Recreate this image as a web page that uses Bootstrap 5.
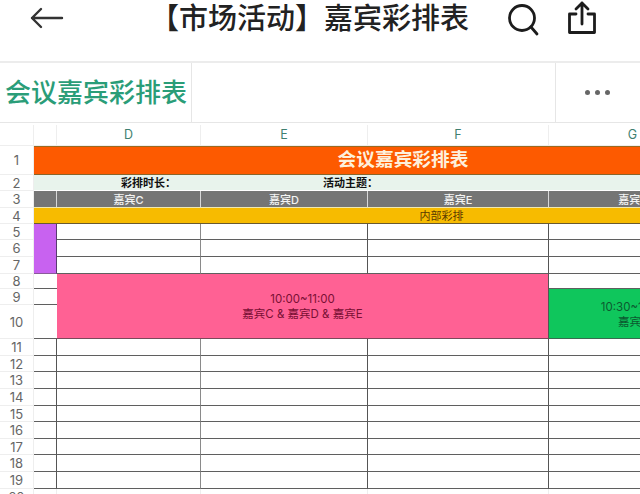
<!DOCTYPE html>
<html lang="zh">
<head>
<meta charset="utf-8">
<title>会议嘉宾彩排表</title>
<link href="https://cdn.jsdelivr.net/npm/bootstrap@5.3.0/dist/css/bootstrap.min.css" rel="stylesheet">
<style>
html,body{height:494px;overflow:hidden;background:#fff}
body{font-family:Inter,"Noto Sans CJK SC",sans-serif}
.topbar{height:63px;border-bottom:2px solid #ececec;padding:0 0 23px 29px}
.back-ico{width:36px;height:24px;color:#333}
.page-title{font-size:29px;line-height:36px;color:#222;font-weight:500;margin-left:85px;white-space:nowrap;width:319px}
.search-ico{width:36px;height:36px;margin-left:36px;color:#1c1c1c}
.share-ico{width:30px;height:36px;margin-left:26px;color:#1c1c1c}
.tabbar{height:60px;border-bottom:1px solid #e6e6e6}
.doc-name{width:192px;padding-left:5px;font-size:26px;font-weight:500;color:#2a9d78;border-right:1px solid #e6e6e6;white-space:nowrap;line-height:60px}
.more-cell{width:85px;margin-left:auto;border-left:1px solid #e6e6e6;gap:5px;padding-left:29px}
.more-dot{width:5px;height:5px;border-radius:50%;background:#666}
.sheet-wrap{margin-top:2px;overflow:hidden;height:371px}
.sheet{width:849px;table-layout:fixed;border-collapse:separate;border-spacing:0;font-size:11.5px;line-height:1;color:#333}
.sheet td,.sheet th{padding:0;font-weight:400;text-align:center;vertical-align:middle;overflow:hidden;white-space:nowrap;border-bottom:1px solid #5f5f5f}
.sheet tr:nth-child(1){height:21px}.sheet tr:nth-child(2){height:29px}.sheet tr:nth-child(3){height:16px}
.sheet tr:nth-child(4){height:17px}.sheet tr:nth-child(5){height:16px}.sheet tr:nth-child(6){height:16px}
.sheet tr:nth-child(7){height:17px}.sheet tr:nth-child(8){height:17px}.sheet tr:nth-child(9){height:15px}
.sheet tr:nth-child(10){height:16px}.sheet tr:nth-child(11){height:34px}.sheet tr:nth-child(12){height:17px}
.sheet tr:nth-child(13){height:16px}.sheet tr:nth-child(14){height:17px}.sheet tr:nth-child(15){height:17px}
.sheet tr:nth-child(16){height:16px}.sheet tr:nth-child(17){height:17px}.sheet tr:nth-child(18){height:16px}
.sheet tr:nth-child(19){height:17px}.sheet tr:nth-child(20){height:17px}.sheet tr:nth-child(21){height:16px}
.sheet th.row-no,.sheet td.col-no{background:#fff;color:#666;font-size:13px;padding-top:1px;border-bottom:1px solid #eee;border-right:1px solid #eee}
.sheet td.col-no{color:#3f7f70;font-size:12.5px}
.sheet td.vline{border-right:1px solid #555}
.sheet td.vmid{border-right:1px solid #8a8a8a}
.banner{background:#fd5a00;color:#fdf0dc;font-size:18.7px!important;font-weight:700!important;border-top:1px solid #9a6a20;border-bottom:1px solid #8a6428!important}
.info-row{background:#e8f3ec;color:#111;font-size:11px;padding-top:2px!important;font-weight:700!important;border-bottom:1px solid #fff!important}
.info-a{text-align:right!important;padding-right:25px!important}
.info-b{text-align:left!important;padding-left:122px!important}
.guest-head{background:#757575;color:#f3f3f3;font-weight:500!important;font-size:11px;padding-top:2px!important;border-right:1px solid #d8d8d8;border-bottom:1px solid #f0e8b0!important}
.stage-row{background:#f7bb00;color:#5a3a00;font-size:11px;padding-top:2px!important;border-bottom:1px solid #6a5a30!important}
.purple-cell{background:#c862f0;border-right:1px solid #5a3a70!important;border-bottom:1px solid #8a5a9a!important}
.pink-cell{background:#ff6194;color:#7a1035;line-height:15px!important;padding-top:2px!important;border-right:1px solid #555;border-bottom:1px solid #7a4a5a!important}
.green-cell{background:#0fc65c;color:#0c5a30;line-height:15px!important;padding-top:2px!important;border-bottom:1px solid #3a6a50!important}
</style>
</head>
<body>
<header class="topbar d-flex align-items-center">
  <svg class="back-ico" viewBox="0 0 36 24" fill="none" stroke="currentColor" stroke-width="2.4" stroke-linecap="round" stroke-linejoin="round"><path d="M33 11H3M12 2l-9 9 9 9"/></svg>
  <div class="page-title">【市场活动】嘉宾彩排表</div>
  <svg class="search-ico" viewBox="0 0 36 36" fill="none" stroke="currentColor" stroke-width="2.8" stroke-linecap="round"><circle cx="17" cy="17" r="12.5"/><path d="M26 26l6 7"/></svg>
  <svg class="share-ico" viewBox="0 0 30 36" fill="none" stroke="currentColor" stroke-width="2.8" stroke-linecap="round" stroke-linejoin="round"><path d="M9 13H2.500v18.500h25V13H21"/><path d="M15 23V2M9 8l6-6 6 6"/></svg>
</header>
<div class="tabbar d-flex">
  <div class="doc-name">会议嘉宾彩排表</div>
  <div class="more-cell d-flex align-items-center"><span class="more-dot"></span><span class="more-dot"></span><span class="more-dot"></span></div>
</div>
<div class="sheet-wrap">
<table class="sheet">
  <colgroup><col style="width:34px"><col style="width:23px"><col style="width:144px"><col style="width:167px"><col style="width:181px"><col style="width:168px"><col style="width:55px"><col style="width:77px"></colgroup>
  <tr><td class="col-no"></td><td class="col-no"></td><td class="col-no">D</td><td class="col-no">E</td><td class="col-no">F</td><td class="col-no">G</td></tr>
  <tr><th class="row-no">1</th><td class="banner" colspan="6">会议嘉宾彩排表</td></tr>
  <tr><th class="row-no">2</th><td class="info-row info-a" colspan="2">彩排时长：</td><td class="info-row info-b" colspan="5">活动主题：</td></tr>
  <tr><th class="row-no">3</th><td class="guest-head"></td><td class="guest-head">嘉宾C</td><td class="guest-head">嘉宾D</td><td class="guest-head">嘉宾E</td><td class="guest-head">嘉宾F</td></tr>
  <tr><th class="row-no">4</th><td class="stage-row" colspan="7">内部彩排</td></tr>
  <tr><th class="row-no">5</th><td class="purple-cell" rowspan="3"></td><td class="vmid"></td><td class="vline"></td><td class="vline"></td><td></td></tr>
  <tr><th class="row-no">6</th><td class="vmid"></td><td class="vline"></td><td class="vline"></td><td></td></tr>
  <tr><th class="row-no">7</th><td class="vmid"></td><td class="vline"></td><td class="vline"></td><td></td></tr>
  <tr><th class="row-no">8</th><td></td><td class="pink-cell" colspan="3" rowspan="3">10:00~11:00<br>嘉宾C &amp; 嘉宾D &amp; 嘉宾E</td><td></td></tr>
  <tr><th class="row-no">9</th><td></td><td class="green-cell" rowspan="2">10:30~11:00<br>嘉宾F</td></tr>
  <tr><th class="row-no">10</th><td></td></tr>
  <tr><th class="row-no">11</th><td class="vline"></td><td class="vmid"></td><td class="vline"></td><td class="vline"></td><td></td></tr>
  <tr><th class="row-no">12</th><td class="vline"></td><td class="vmid"></td><td class="vline"></td><td class="vline"></td><td></td></tr>
  <tr><th class="row-no">13</th><td class="vline"></td><td class="vmid"></td><td class="vline"></td><td class="vline"></td><td></td></tr>
  <tr><th class="row-no">14</th><td class="vline"></td><td class="vmid"></td><td class="vline"></td><td class="vline"></td><td></td></tr>
  <tr><th class="row-no">15</th><td class="vline"></td><td class="vmid"></td><td class="vline"></td><td class="vline"></td><td></td></tr>
  <tr><th class="row-no">16</th><td class="vline"></td><td class="vmid"></td><td class="vline"></td><td class="vline"></td><td></td></tr>
  <tr><th class="row-no">17</th><td class="vline"></td><td class="vmid"></td><td class="vline"></td><td class="vline"></td><td></td></tr>
  <tr><th class="row-no">18</th><td class="vline"></td><td class="vmid"></td><td class="vline"></td><td class="vline"></td><td></td></tr>
  <tr><th class="row-no">19</th><td class="vline"></td><td class="vmid"></td><td class="vline"></td><td class="vline"></td><td></td></tr>
  <tr><th class="row-no">20</th><td class="col-no"></td><td class="col-no"></td><td class="col-no"></td><td class="col-no"></td><td class="col-no"></td></tr>
</table>
</div>
<script src="https://cdn.jsdelivr.net/npm/bootstrap@5.3.0/dist/js/bootstrap.bundle.min.js"></script>
</body>
</html>
